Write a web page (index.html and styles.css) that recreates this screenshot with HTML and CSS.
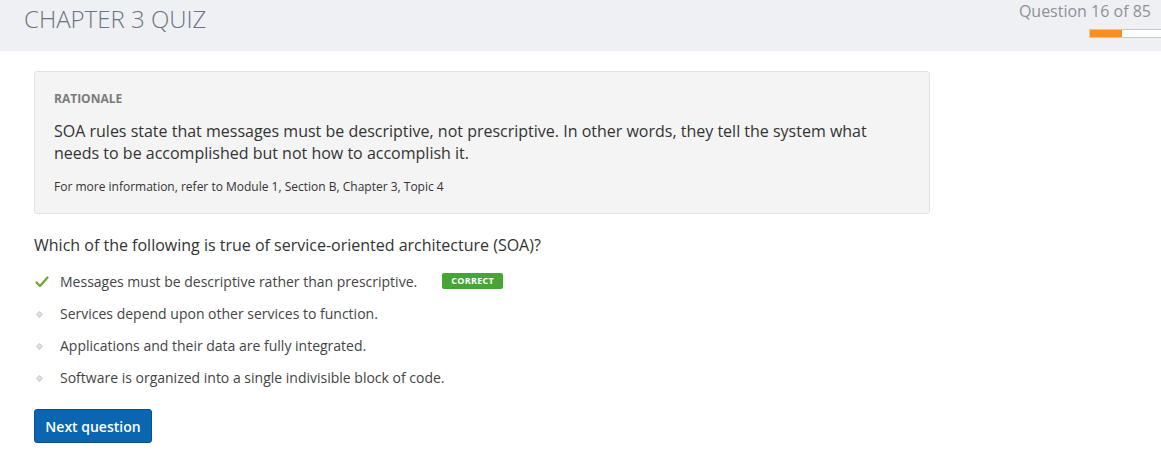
FILE: index.html
```html
<!DOCTYPE html>
<html lang="en">
<head>
<meta charset="utf-8">
<title>Chapter 3 Quiz</title>
<link rel="stylesheet" href="styles.css">
</head>
<body>
<header class="topbar">
  <h1 class="title">CHAPTER 3 QUIZ</h1>
  <div class="progress">
    <div class="progress-label">Question 16 of 85</div>
    <div class="progress-track"><div class="progress-fill" style="width:32px"></div></div>
  </div>
</header>
<main class="content">
  <section class="rationale">
    <div class="rationale-label">RATIONALE</div>
    <p class="rationale-text">SOA rules state that messages must be descriptive, not prescriptive. In other words, they tell the system what needs to be accomplished but not how to accomplish it.</p>
    <p class="rationale-ref">For more information, refer to Module 1, Section B, Chapter 3, Topic 4</p>
  </section>
  <p class="question">Which of the following is true of service-oriented architecture (SOA)?</p>
  <ul class="answers">
    <li class="answer">
      <span class="icon"><svg width="14" height="12" viewBox="0 0 14 12"><path d="M1.5 6.5 L5 10 L12.5 1.5" fill="none" stroke="#6ea52e" stroke-width="2.2" stroke-linecap="round" stroke-linejoin="round"/></svg></span>
      <span class="answer-text">Messages must be descriptive rather than prescriptive.</span>
      <span class="badge">CORRECT</span>
    </li>
    <li class="answer">
      <span class="icon"><span class="dot"></span></span>
      <span class="answer-text">Services depend upon other services to function.</span>
    </li>
    <li class="answer">
      <span class="icon"><span class="dot"></span></span>
      <span class="answer-text">Applications and their data are fully integrated.</span>
    </li>
    <li class="answer">
      <span class="icon"><span class="dot"></span></span>
      <span class="answer-text">Software is organized into a single indivisible block of code.</span>
    </li>
  </ul>
  <button class="next-btn" type="button">Next question</button>
</main>
</body>
</html>
```

FILE: styles.css
```css
* { box-sizing: border-box; }
html, body { margin: 0; padding: 0; }
body {
  font-family: "Open Sans", "Liberation Sans", sans-serif;
  color: #333;
  background: #fff;
  width: 1161px;
  height: 452px;
  overflow: hidden;
}
.topbar {
  height: 51px;
  background: #eff0f3;
  display: flex;
  justify-content: space-between;
  align-items: flex-start;
  padding-left: 24px;
}
.title {
  margin: 0;
  padding-top: 3px;
  font-size: 24px;
  font-weight: 300;
  line-height: 32px;
  color: #6b7482;
  letter-spacing: 0;
}
.progress {
  display: flex;
  flex-direction: column;
  align-items: flex-end;
  padding-right: 10px;
}
.progress-label {
  font-size: 16px;
  line-height: 22px;
  color: #8c9199;
}
.progress-track {
  margin-top: 7px;
  margin-right: -12px;
  width: 74px;
  height: 9px;
  background: #fff;
  border: 1px solid #c9c9c9;
  border-right: none;
}
.progress-fill {
  height: 100%;
  background: #f7901e;
}
.content {
  padding: 20px 0 0 34px;
}
.rationale {
  width: 896px;
  height: 143px;
  background: #f4f4f4;
  border: 1px solid #e2e2e2;
  border-radius: 3px;
  padding: 18px 19px 0;
}
.rationale-label {
  font-size: 12px;
  font-weight: 700;
  color: #7b7b7b;
  line-height: 17px;
}
.rationale-text {
  margin: 13px 0 0;
  font-size: 16px;
  line-height: 22px;
  color: #333;
  max-width: 830px;
}
.rationale-ref {
  margin: 14px 0 0;
  font-size: 12px;
  line-height: 17px;
  color: #333;
}
.question {
  margin: 19px 0 0;
  font-size: 16px;
  line-height: 24px;
  color: #333;
}
.answers {
  list-style: none;
  margin: 9px 0 0;
  padding: 0;
}
.answer {
  display: flex;
  align-items: center;
  height: 32px;
  font-size: 14px;
  color: #444;
}
.icon {
  width: 26px;
  display: flex;
  align-items: center;
  padding-left: 1px;
}
.dot {
  width: 5px;
  height: 5px;
  margin-left: 2px;
  background: #e2e2e2;
  border: 1px solid #cfcfcf;
  transform: rotate(45deg);
}
.answer-text { line-height: 20px; }
.badge {
  margin-left: 25px;
  margin-top: -3px;
  background: #45a634;
  color: #fff;
  font-size: 9px;
  font-weight: 700;
  letter-spacing: 0.3px;
  line-height: 16px;
  height: 16px;
  padding: 0 9px;
  border-radius: 2px;
}
.next-btn {
  margin-top: 15px;
  width: 118px;
  height: 34px;
  background: #0a66b0;
  border: 1px solid #07518d;
  border-radius: 3px;
  color: #fff;
  font-family: "Open Sans", "Liberation Sans", sans-serif;
  font-size: 14px;
  font-weight: 600;
  padding: 0;
  cursor: pointer;
}
```
